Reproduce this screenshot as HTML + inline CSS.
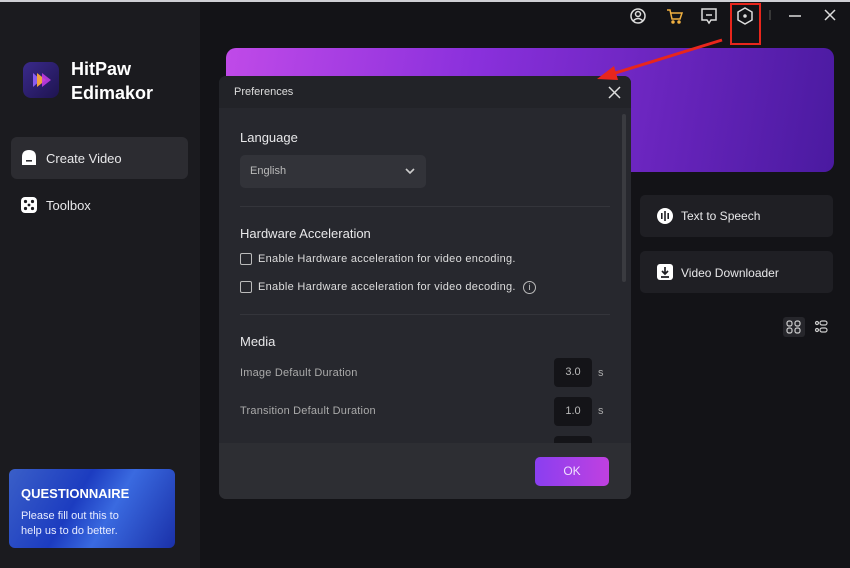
<!DOCTYPE html>
<html><head><meta charset="utf-8"><style>
*{margin:0;padding:0;box-sizing:border-box}
body{width:850px;height:568px;background:#131317;font-family:"Liberation Sans",sans-serif;position:relative;overflow:hidden;color:#fff}
.abs{position:absolute}
.side{left:0;top:0;width:200px;height:568px;background:#1b1b1f}
.t{position:absolute;white-space:nowrap}
</style></head><body>
<div class="abs side"></div>
<div class="abs" style="left:0;top:0;width:850px;height:2px;background:#cfcfd4"></div>
<!-- logo -->
<div class="abs" style="left:23px;top:62px;width:36px;height:36px;border-radius:8px;background:linear-gradient(135deg,#3a2a8a,#1e1450)"></div>
<svg class="abs" style="left:23px;top:62px" width="36" height="36"><path d="M10 11 L10 25 L18 18Z" fill="#8a5cf0"/><path d="M14 11 L14 25 L23 18Z" fill="#f2a23a"/><path d="M19 11 L19 25 L28 18Z" fill="#c03ae0" opacity=".9"/></svg>
<div class="t" style="left:71px;top:57px;font-size:18px;font-weight:bold;line-height:24px">HitPaw<br>Edimakor</div>
<div class="abs" style="left:11px;top:137px;width:177px;height:42px;border-radius:6px;background:#2c2c31"></div>
<svg class="abs" style="left:20px;top:149px" width="18" height="17"><path d="M2 8 Q2 1 9 1 Q16 1 16 8 L16 16 L2 16Z" fill="#fff"/><rect x="6" y="11" width="6" height="1.6" fill="#2c2c31"/></svg>
<div class="t" style="left:46px;top:151px;font-size:13px;color:#e8e8ea">Create Video</div>
<svg class="abs" style="left:20px;top:196px" width="18" height="18"><rect x="1" y="1" width="16" height="16" rx="4" fill="#fff"/><circle cx="5.5" cy="5.5" r="1.6" fill="#1b1b1f"/><circle cx="12.5" cy="5.5" r="1.6" fill="#1b1b1f"/><circle cx="5.5" cy="12.5" r="1.6" fill="#1b1b1f"/><circle cx="12.5" cy="12.5" r="1.6" fill="#1b1b1f"/><circle cx="9" cy="9" r="1.4" fill="#1b1b1f"/></svg>
<div class="t" style="left:46px;top:198px;font-size:13px;color:#e8e8ea">Toolbox</div>
<div class="abs" style="left:9px;top:469px;width:166px;height:79px;border-radius:6px;background:linear-gradient(120deg,#3a5fc8,#1c3cc0 40%,#3a6ae0 60%,#1a30a8)"></div>
<div class="t" style="left:21px;top:486px;font-size:13px;font-weight:bold">QUESTIONNAIRE</div>
<div class="t" style="left:21px;top:509px;font-size:11px;line-height:15px;color:#e8ecff">Please fill out this to<br>help us to do better.</div>
<!-- top icons -->
<svg class="abs" style="left:628px;top:6px" width="220" height="20" fill="none" stroke="#ddd" stroke-width="1.5">
<circle cx="10" cy="10" r="7"/><circle cx="10" cy="8" r="2.5"/><path d="M5 15 Q10 10 15 15"/>
<path d="M39 4 L42 4 L44 13 L52 13 L54 7 L43 7" stroke="#f0b040"/><circle cx="45" cy="16" r="1" fill="#f0b040" stroke="#f0b040"/><circle cx="51" cy="16" r="1" fill="#f0b040" stroke="#f0b040"/>
<path d="M74 3 L88 3 L88 14 L83 14 L81 17 L79 14 L74 14Z"/><path d="M78 9 L84 9"/>
<path d="M117 2 L124 6 L124 14 L117 18 L110 14 L110 6Z"/><circle cx="117" cy="10" r="1" fill="#ddd"/>
<path d="M142 4 L142 14" stroke="#444"/>
<path d="M161 10 L173 10"/><path d="M197 4 L207 14 M207 4 L197 14"/>
</svg>
<div class="abs" style="left:730px;top:3px;width:31px;height:42px;border:2px solid #e8261c"></div>
<!-- banner -->
<div class="abs" style="left:226px;top:48px;width:608px;height:124px;border-radius:10px;background:linear-gradient(100deg,#c04ae8,#8a30dc 40%,#4a1aa0)"></div>
<!-- right cards -->
<div class="abs" style="left:640px;top:195px;width:193px;height:42px;border-radius:5px;background:#1f1f24"></div>
<div class="abs" style="left:640px;top:251px;width:193px;height:42px;border-radius:5px;background:#1f1f24"></div>
<svg class="abs" style="left:656px;top:207px" width="18" height="18"><circle cx="9" cy="9" r="8" fill="#fff"/><rect x="5" y="6" width="1.6" height="6" fill="#1f1f24"/><rect x="8.2" y="4" width="1.6" height="10" fill="#1f1f24"/><rect x="11.4" y="6" width="1.6" height="6" fill="#1f1f24"/></svg>
<div class="t" style="left:681px;top:209px;font-size:12px;color:#e8e8ea">Text to Speech</div>
<svg class="abs" style="left:656px;top:263px" width="18" height="18"><rect x="1" y="1" width="16" height="16" rx="3" fill="#fff"/><path d="M9 4 L9 11 M6 8 L9 11 L12 8 M5 14 L13 14" stroke="#1f1f24" stroke-width="1.7" fill="none"/></svg>
<div class="t" style="left:681px;top:266px;font-size:12px;color:#e8e8ea">Video Downloader</div>
<div class="abs" style="left:783px;top:317px;width:22px;height:20px;border-radius:3px;background:#26262b"></div>
<svg class="abs" style="left:786px;top:320px" width="44" height="14" fill="none" stroke="#ccc" stroke-width="1.2"><rect x="1" y="1" width="5" height="5" rx="2"/><rect x="9" y="1" width="5" height="5" rx="2"/><rect x="1" y="8" width="5" height="5" rx="2"/><rect x="9" y="8" width="5" height="5" rx="2"/><circle cx="31" cy="3" r="1.5"/><circle cx="31" cy="10" r="1.5"/><rect x="34" y="1" width="7" height="4" rx="2"/><rect x="34" y="8" width="7" height="4" rx="2"/></svg>
<!-- dialog -->
<div class="abs" style="left:219px;top:76px;width:412px;height:423px;border-radius:7px;background:#27282e;overflow:hidden">
 <div class="abs" style="left:0;top:0;width:412px;height:32px;background:#222328"></div>
 <div class="abs" style="left:0;top:367px;width:412px;height:56px;background:#2d2e33"></div>
 <div class="abs" style="left:403px;top:38px;width:4px;height:168px;border-radius:2px;background:#3a3b40"></div>
</div>
<div class="t" style="left:234px;top:86px;font-size:11px;color:#ddd">Preferences</div>
<svg class="abs" style="left:608px;top:86px" width="13" height="13"><path d="M1 1 L12 12 M12 1 L1 12" stroke="#ddd" stroke-width="1.5"/></svg>
<div class="t" style="left:240px;top:130px;font-size:13px;color:#e8e8ea">Language</div>
<div class="abs" style="left:240px;top:155px;width:186px;height:33px;border-radius:5px;background:#323339"></div>
<div class="t" style="left:250px;top:165px;font-size:11px;color:#bbb">English</div>
<svg class="abs" style="left:405px;top:168px" width="10" height="7"><path d="M1 1 L5 5 L9 1" stroke="#ccc" stroke-width="1.6" fill="none"/></svg>
<div class="abs" style="left:240px;top:206px;width:370px;height:1px;background:#34353b"></div>
<div class="t" style="left:240px;top:226px;font-size:13px;color:#e8e8ea">Hardware Acceleration</div>
<div class="abs" style="left:240px;top:253px;width:12px;height:12px;border:1px solid #bbb;border-radius:2px"></div>
<div class="t" style="left:258px;top:253px;font-size:11px;letter-spacing:0.3px;color:#ddd">Enable Hardware acceleration for video encoding.</div>
<div class="abs" style="left:240px;top:281px;width:12px;height:12px;border:1px solid #bbb;border-radius:2px"></div>
<div class="t" style="left:258px;top:281px;font-size:11px;letter-spacing:0.3px;color:#ddd">Enable Hardware acceleration for video decoding.</div>
<div class="abs" style="left:523px;top:281px;width:13px;height:13px;border:1px solid #bbb;border-radius:50%;font-size:9px;text-align:center;line-height:11px;color:#ccc">i</div>
<div class="abs" style="left:240px;top:314px;width:370px;height:1px;background:#34353b"></div>
<div class="t" style="left:240px;top:334px;font-size:13px;color:#e8e8ea">Media</div>
<div class="t" style="left:240px;top:367px;font-size:11px;letter-spacing:0.2px;color:#aaa">Image Default Duration</div>
<div class="abs" style="left:554px;top:358px;width:38px;height:29px;border-radius:4px;background:#141418;font-size:11px;color:#bbb;text-align:center;line-height:29px">3.0</div>
<div class="t" style="left:598px;top:367px;font-size:11px;color:#aaa">s</div>
<div class="t" style="left:240px;top:405px;font-size:11px;letter-spacing:0.2px;color:#aaa">Transition Default Duration</div>
<div class="abs" style="left:554px;top:397px;width:38px;height:29px;border-radius:4px;background:#141418;font-size:11px;color:#bbb;text-align:center;line-height:29px">1.0</div>
<div class="t" style="left:598px;top:405px;font-size:11px;color:#aaa">s</div>
<div class="abs" style="left:554px;top:436px;width:38px;height:7px;border-radius:4px 4px 0 0;background:#141418"></div>
<div class="abs" style="left:535px;top:457px;width:74px;height:29px;border-radius:5px;background:linear-gradient(90deg,#8a3ff0,#c040e0);font-size:12px;text-align:center;line-height:29px;color:#f0e0ff">OK</div>
<!-- arrow -->
<svg class="abs" style="left:0;top:0" width="850" height="568"><path d="M722 40 L612 74" stroke="#e8261c" stroke-width="3"/><path d="M597 79 L614 66 L618 80Z" fill="#e8261c"/></svg>
</body></html>
